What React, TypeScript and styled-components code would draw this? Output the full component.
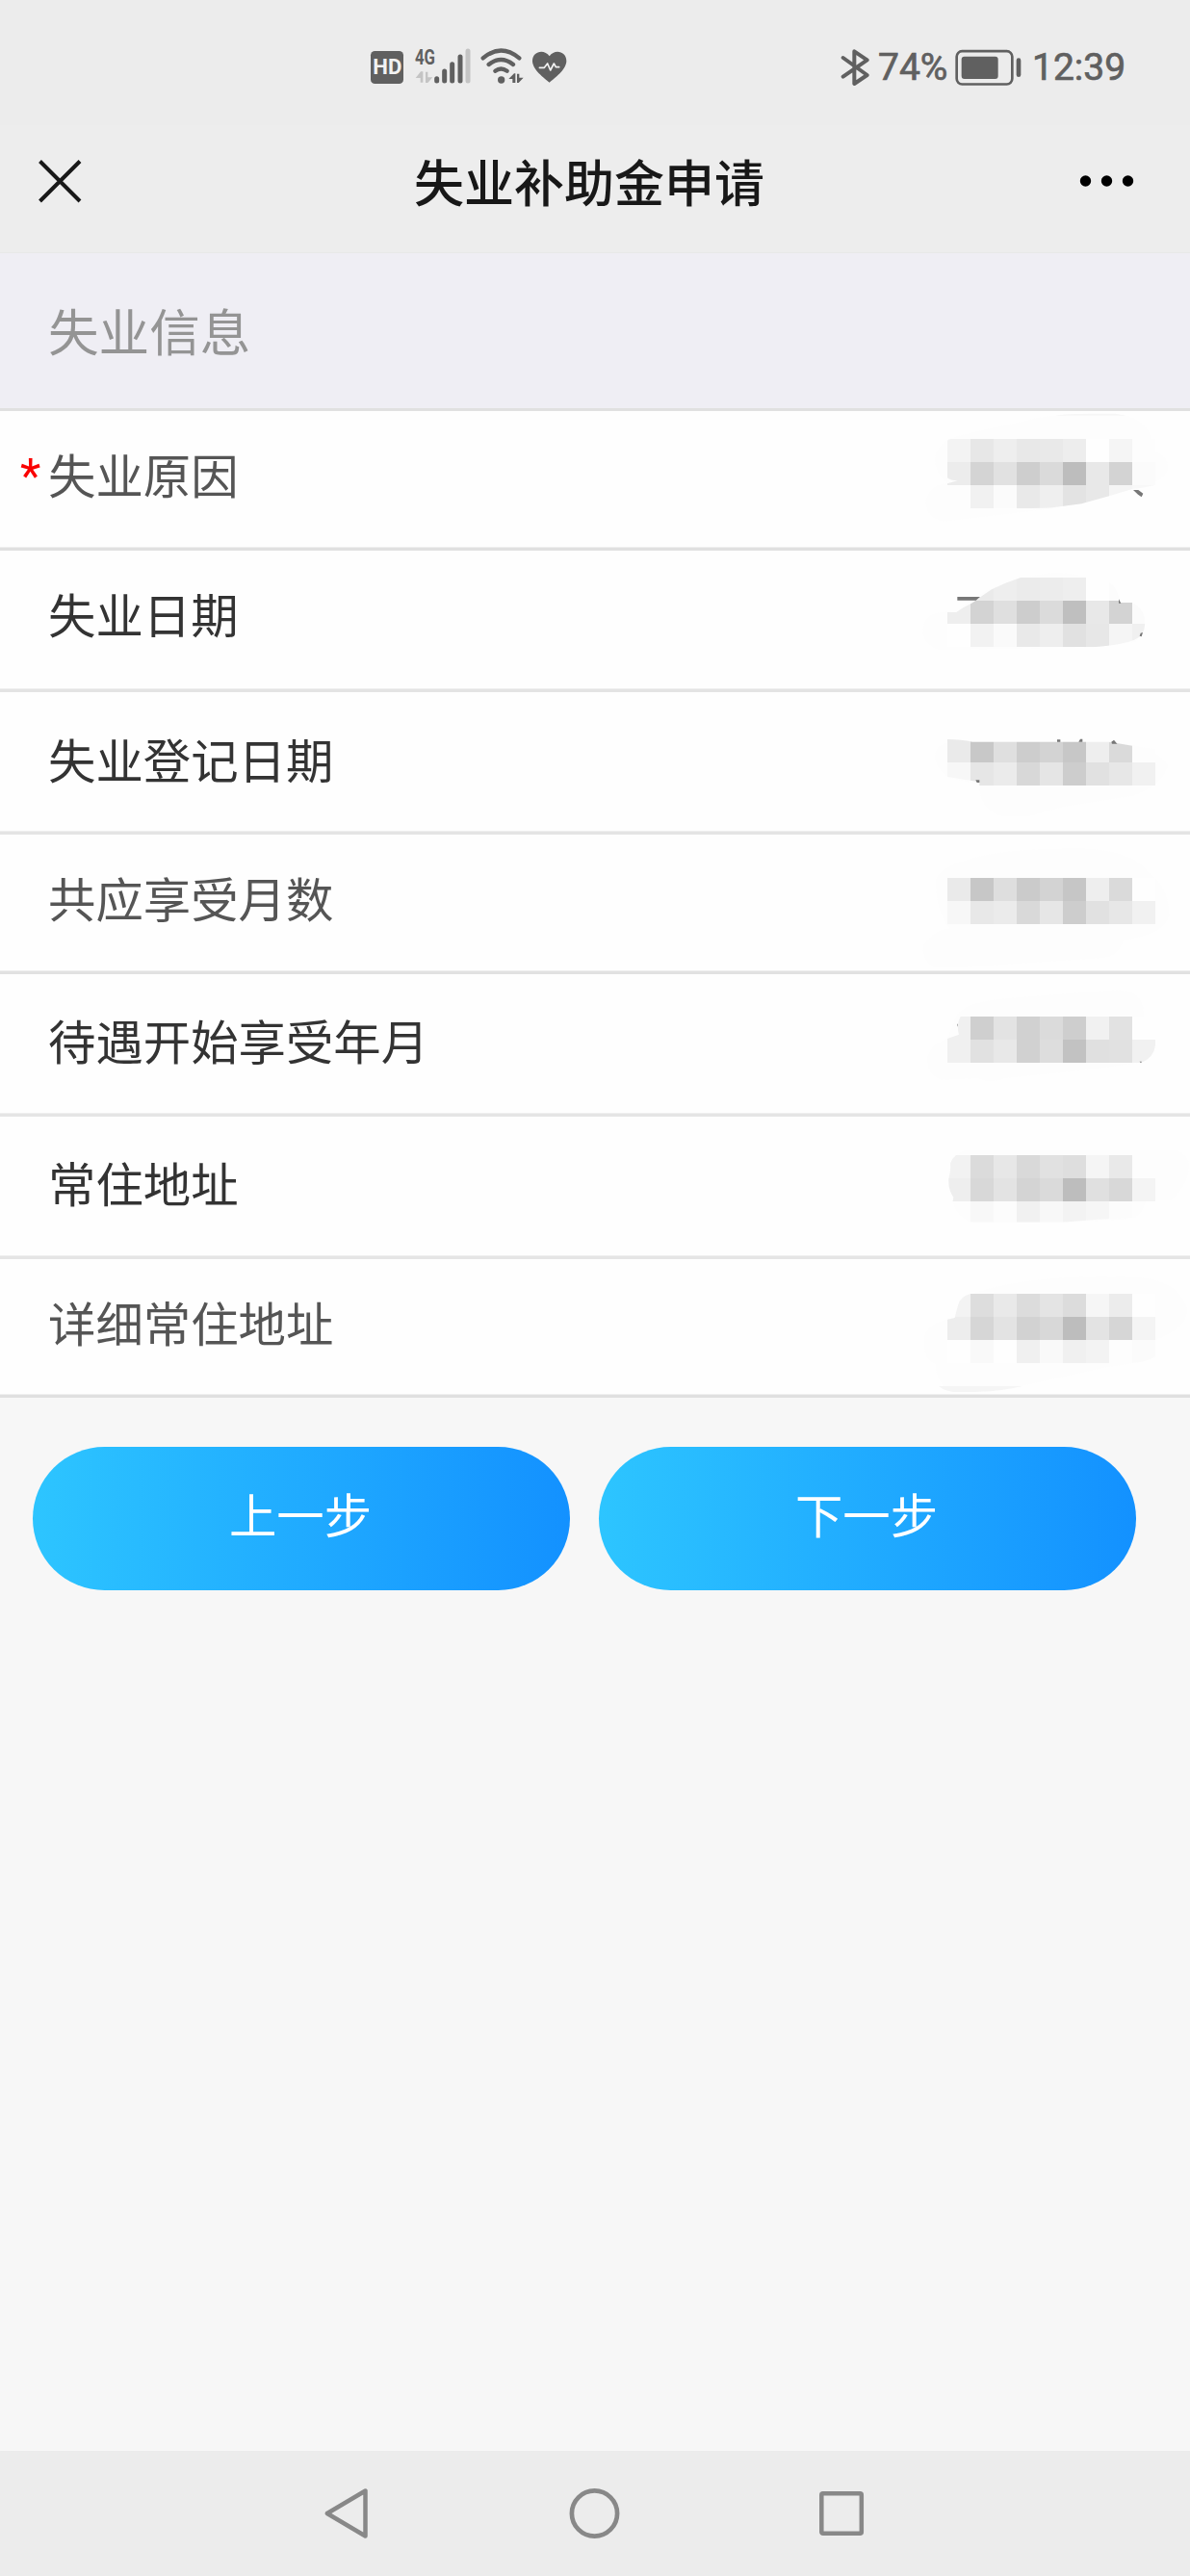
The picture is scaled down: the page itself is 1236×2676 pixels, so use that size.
import React from "react";
import styled, { createGlobalStyle } from "styled-components";

const GlobalStyle = createGlobalStyle`
  html, body { margin: 0; padding: 0; background: #f7f7f7; }
  * { box-sizing: border-box; }
  svg { display: block; flex: none; }
`;

const cjk = `"Noto Sans CJK SC", "Noto Sans", sans-serif`;

const Screen = styled.div`
  width: 1236px;
  height: 2676px;
  display: flex;
  flex-direction: column;
  background: #f7f7f7;
  font-family: ${cjk};
`;

const StatusBar = styled.div`
  height: 130px;
  flex: none;
  display: flex;
  align-items: flex-start;
  justify-content: space-between;
  padding: 40px 66px 0 370px;
  background: #ececec;
`;

const StatusGroup = styled.div`
  display: flex;
  align-items: center;
  height: 60px;
`;

const StatusText = styled.span<{ $width: number; $gap: number }>`
  width: ${(p) => p.$width}px;
  margin-left: ${(p) => p.$gap}px;
  font: 400 39px/60px Roboto, sans-serif;
  color: #606060;
  white-space: nowrap;
  -webkit-text-stroke: 0.7px #606060;
`;

const TitleBar = styled.header`
  height: 133px;
  flex: none;
  display: grid;
  grid-template-columns: 120px 1fr 120px;
  padding-bottom: 17px;
  align-items: center;
  background: #ededed;
  border-bottom: 1px solid #e8e8e8;
`;

const Title = styled.h1`
  margin: 0;
  padding-right: 12px;
  text-align: center;
  font-size: 52px;
  line-height: 72px;
  font-weight: 500;
  color: #181818;
  white-space: nowrap;
`;

const IconButton = styled.button<{ $pad: number }>`
  border: 0;
  background: none;
  padding: 0 0 0 ${(p) => p.$pad}px;
  height: 60px;
`;

const SectionHeader = styled.h2`
  margin: 0;
  height: 164px;
  flex: none;
  padding: 42px 50px 0;
  background: #efeef4;
  border-bottom: 3px solid #e0e0e0;
  color: #949494;
  font-size: 52.6px;
  font-weight: 400;
  line-height: 74px;
`;

const Row = styled.div<{ $height: number; $top: number; $line: string }>`
  height: ${(p) => p.$height}px;
  flex: none;
  display: flex;
  justify-content: space-between;
  padding-left: 50px;
  background: #fefefe;
  border-bottom: 3px solid ${(p) => p.$line};
  box-shadow: inset 0 -1px 0 #efefef;
  & > label { padding-top: ${(p) => p.$top}px; }
`;

const Label = styled.label<{ $muted?: boolean }>`
  position: relative;
  font-size: 49.4px;
  line-height: 60px;
  color: ${(p) => (p.$muted ? "#555" : "#333")};
  white-space: nowrap;
`;

const Required = styled.span`
  position: absolute;
  left: -29px;
  margin-top: 3px;
  font-family: Roboto, sans-serif;
  color: #fa0000;
`;

const Actions = styled.div`
  display: grid;
  grid-template-columns: 558px 558px;
  column-gap: 30px;
  padding: 51px 34px 0;
  flex: 1;
  align-content: start;
`;

const StepButton = styled.button`
  height: 149px;
  border: 0;
  border-radius: 75px;
  padding: 0 2px 11px 0;
  background: linear-gradient(90deg, #2dc5ff, #1391ff);
  color: #fff;
  font-family: ${cjk};
  font-size: 49.4px;
  line-height: 60px;
`;

const NavBar = styled.nav`
  height: 130px;
  flex: none;
  display: flex;
  justify-content: space-between;
  align-items: center;
  padding: 0 336px 0 335px;
  background: #ececec;
`;

const dark = "#606060";
const pale = "#c4c4c4";

const SignalIcons = () => (
  <svg width="230" height="60" viewBox="0 0 690 180" fill="none">
    <rect x="45" y="39" width="102" height="102" rx="13" fill={dark} />
    <text x="97" y="112" textAnchor="middle" fontFamily="Roboto, sans-serif" fontWeight="700" fontSize="65" textLength="90" lengthAdjust="spacingAndGlyphs" fill="#f2f2f2">HD</text>
    <text x="183" y="80" fontFamily="Roboto, sans-serif" fontWeight="700" fontSize="67" textLength="63" lengthAdjust="spacingAndGlyphs" fill={dark}>4G</text>
    <path d="M185 123 201 103H208V137H200V123ZM216 104H223V121H238L223 138H216Z" fill={pale} />
    <g strokeWidth="15" strokeLinecap="round" stroke={dark}>
      <path d="M251 125V132M275 102V132M299 80V132M324 57V132" />
      <path d="M348 39V132" stroke={pale} />
    </g>
    <g stroke={dark} strokeWidth="13" strokeLinecap="round">
      <path d="M395 61Q451 14 508 61" />
      <path d="M413 81Q451 51 489 81" />
      <path d="M433 101Q451 88 470 101" />
    </g>
    <circle cx="452" cy="129" r="11" fill={dark} />
    <path d="M475 126 492 109H496V138H487V126ZM501 110H508V122H521L506 138H501Z" fill={dark} />
    <path d="M602 137C586 124 549 97 549 70C549 39 586 31 602 55C618 31 655 39 655 70C655 97 618 124 602 137Z" fill={dark} />
    <path d="M571 91H586L596 78 605 99 616 78 622 89H632" stroke="#f2f2f2" strokeWidth="5" strokeLinejoin="round" strokeLinecap="round" />
  </svg>
);

const Bluetooth = () => (
  <svg width="30" height="40" viewBox="37 28 90 120" fill="none">
    <path d="M45 58 120 112 80 139V38L120 65 45 117" stroke={dark} strokeWidth="12" strokeLinejoin="round" strokeLinecap="round" />
  </svg>
);

const Battery = () => (
  <svg width="70" height="40" viewBox="395 28 210 120" fill="none">
    <rect x="400" y="37.500" width="173" height="103" rx="17" stroke={dark} strokeWidth="8" />
    <rect x="415" y="54" width="114" height="70" rx="9" fill={dark} />
    <path d="M593 66V111" stroke={dark} strokeWidth="14" strokeLinecap="round" />
  </svg>
);

type MosaicData = {
  viewY: number;
  gridY: number;
  shades: string[][];
  clip: string;
  haze: string;
  specks?: string;
};

type Field = {
  name: string;
  height: number;
  top: number;
  line: string;
  muted?: boolean;
  required?: boolean;
  mosaic: MosaicData;
};

const shadeRow = (s: string) => s.split(" ").map((v) => `#${v}${v}${v}`);

const fields: Field[] = [
  {
    name: "失业原因", height: 145, top: 35, line: "#e0e0e0", muted: true, required: true,
    mosaic: {
      viewY: 6, gridY: 93,
      shades: ["f3 e7 ee e8 e9 ed fe f5 fd", "ec d4 e1 ce da bd e8 d3 fb", "fd f1 fb e9 ef e3 e8 f5 f8"].map(shadeRow),
      clip: "M102 100Q104 93 114 93H751V236Q720 244 678 249L606 271L520 295L430 307Q400 309 318 309H102V232L134 223Q112 223 102 214Z",
      haze: "M63 155Q70 95 150 80L350 35Q440 10 650 18Q720 35 735 85L735 130Q790 140 790 185Q780 225 700 245L430 310L90 350Q35 340 34 285Q50 235 102 230Q63 200 63 155Z",
      specks: "M681 252H697L712 263L707 274L696 266Z",
    },
  },
  {
    name: "失业日期", height: 147, top: 34.5, line: "#e3e3e3",
    mosaic: {
      viewY: 441, gridY: 525,
      shades: ["f4 ea ee eb ec ee fe fc fd", "ee d3 df cd db bf e8 d3 fb", "fe f2 fa e9 ee e1 e7 f5 f0"].map(shadeRow),
      clip: "M102 633H130Q150 618 180 604Q205 585 240 562Q285 540 330 525H534Q586 524 619 550Q636 573 639 603H677Q717 620 718 669Q716 708 683 720Q645 735 566 741H102Z",
      haze: "M30 665Q50 625 130 633Q230 530 440 509Q600 515 639 603L718 660L690 725L570 742L80 751Q25 735 25 690Z",
      specks: "M133 585H204L191 596H133ZM636 592 643 605H636ZM701 707 704 698 711 696 707 709Z",
    },
  },
  {
    name: "失业登记日期", height: 148, top: 39, line: "#e4e4e4",
    mosaic: {
      viewY: 12, gridY: 159,
      shades: ["ea c8 df cd d3 c7 ee da fd", "f7 e6 eb d8 e5 cd e1 e7 f1", "fe fd fd fd fd fd fd fd fd"].map(shadeRow),
      clip: "M102 159Q145 159 180 167H605L630 171L678 179L750 190V303H202V292L102 276Z",
      haze: "M63 210Q70 160 150 165H610Q750 180 790 240Q770 305 680 335L460 370L360 398H270Q200 375 202 300L110 280Q63 250 63 210Z",
      specks: "M444 160H454V167H444ZM511 167 516 158H523V167ZM613 167 621 161 631 173H615ZM190 286H202V294H194Z",
    },
  },
  {
    name: "共应享受月数", height: 145, top: 35, line: "#e1e1e1", muted: true,
    mosaic: {
      viewY: 456, gridY: 591,
      shades: ["ea c7 de cb d3 c6 ee da fe", "f7 e8 eb d9 e6 cd e1 e7 f1", "fe fd fd fd fd fd fd fd fd"].map(shadeRow),
      clip: "M102 591H750V735H102Z",
      haze: "M66 600Q75 555 180 530Q300 495 550 500Q690 515 725 570Q795 620 793 710Q780 765 650 785Q640 830 590 840L160 869H60Q25 850 25 805Q60 750 110 750Q66 700 66 600Z",
    },
  },
  {
    name: "待遇开始享受年月", height: 148, top: 37.5, line: "#e5e5e5",
    mosaic: {
      viewY: 21, gridY: 153,
      shades: ["f0 cf e3 d1 db ce f1 e2 fe", "f0 e1 e8 d1 dd c2 e0 e1 f1"].map(shadeRow),
      clip: "M143 153H750V242Q746 280 706 297H102V222L138 209Q129 178 143 153Z",
      haze: "M130 150Q160 105 300 95L630 70Q720 75 713 150L750 225Q750 282 700 297L530 320L280 345Q230 365 200 345L80 350Q35 330 40 280Q50 240 102 222Z",
      specks: "M132 176H134V184H133ZM701 293 707 293V296H703Z",
    },
  },
  {
    name: "常住地址", height: 148, top: 37.5, line: "#e5e5e5",
    mosaic: {
      viewY: 465, gridY: 585,
      shades: ["f2 db e7 d9 e1 de f5 e9 fd", "ee d8 e3 d4 da bd e0 d8 f4", "fd f8 fc f1 f8 f3 f6 fc fd"].map(shadeRow),
      clip: "M129 585H750V729H717Q710 768 687 779L570 785L460 794H174Q131 776 119 728L121 716Q104 693 106 659Q114 631 111 611Q116 595 129 585Z",
      haze: "M106 659Q110 585 155 570H820Q858 590 855 620Q850 680 800 725H720Q715 775 650 785L470 796H190Q130 780 119 728Z",
    },
  },
  {
    name: "详细常住地址", height: 144, top: 34.5, line: "#e0e0e0", muted: true,
    mosaic: {
      viewY: 114, gridY: 222,
      shades: ["f3 dd e9 dc e4 dc f6 ec fe", "ed d6 e3 d2 d8 bd e3 d6 f4", "fe f9 fe f0 f9 f0 f3 fd fb"].map(shadeRow),
      clip: "M174 222H750V418Q717 438 672 438H102V302L125 297Q132 269 135 258Q142 230 174 222Z",
      haze: "M30 360Q35 310 125 297Q130 240 180 222Q350 160 670 170Q820 170 850 270Q850 330 750 366V418Q710 438 600 450L330 510Q260 528 130 528Q65 510 65 440Q25 430 30 360Z",
    },
  },
];

const Mosaic = ({ data, id, height }: { data: MosaicData; id: string; height: number }) => (
  <svg width="286" height={height} viewBox={`0 ${data.viewY} 858 ${height * 3}`}>
    <defs>
      <clipPath id={id}><path d={data.clip} /></clipPath>
    </defs>
    <path d={data.haze} fill="#fdfdfd" />
    <g clipPath={`url(#${id})`} shapeRendering="crispEdges">
      {data.shades.map((row, r) =>
        row.map((fill, c) => (
          <rect key={`${r}-${c}`} x={102 + c * 72} y={data.gridY + r * 72} width="72" height="72" fill={fill} />
        ))
      )}
    </g>
    {data.specks && <path d={data.specks} fill="#777" />}
    {id === "value-6" && <path d="M76 510H335Q270 526 185 528H120Q89 523 76 510Z" fill="#f5f5f5" />}
    {id === "value-0" && <path d="M440 20Q465 14 550 14H625L660 20Z" fill="#f6f6f6" />}
  </svg>
);

export default function App() {
  return (
    <Screen>
      <GlobalStyle />
      <StatusBar>
        <StatusGroup><SignalIcons /></StatusGroup>
        <StatusGroup>
          <Bluetooth />
          <StatusText $width={80} $gap={9}>74%</StatusText>
          <Battery />
          <StatusText $width={98} $gap={10}>12:39</StatusText>
        </StatusGroup>
      </StatusBar>
      <TitleBar>
        <IconButton $pad={37} aria-label="关闭">
          <svg width="50" height="50" viewBox="0 0 50 50">
            <path d="M4.500 4.500 46 46M46 4.500 4.500 46" stroke="#181818" strokeWidth="4" />
          </svg>
        </IconButton>
        <Title>失业补助金申请</Title>
        <IconButton $pad={3} aria-label="更多">
          <svg width="60" height="20" viewBox="0 0 60 20">
            <circle cx="8.500" cy="10" r="5.700" />
            <circle cx="30.500" cy="10" r="5.700" />
            <circle cx="52.500" cy="10" r="5.700" />
          </svg>
        </IconButton>
      </TitleBar>
      <SectionHeader>失业信息</SectionHeader>
      {fields.map((f, i) => (
        <Row key={f.name} $height={f.height} $top={f.top} $line={f.line}>
          <Label $muted={f.muted}>
            {f.required && <Required>*</Required>}
            {f.name}
          </Label>
          <Mosaic data={f.mosaic} id={`value-${i}`} height={f.height - 3} />
        </Row>
      ))}
      <Actions>
        <StepButton>上一步</StepButton>
        <StepButton>下一步</StepButton>
      </Actions>
      <NavBar>
        <svg width="50" height="56" viewBox="0 0 50 56" fill="none">
          <path d="M44.500 4.500V51.500L4.800 28Z" stroke="#888" strokeWidth="4.500" strokeLinejoin="round" />
        </svg>
        <svg width="56" height="56" viewBox="0 0 56 56" fill="none">
          <circle cx="27.500" cy="28" r="23.600" stroke="#888" strokeWidth="4.700" />
        </svg>
        <svg width="50" height="56" viewBox="0 0 50 56" fill="none">
          <rect x="3.300" y="7.300" width="41.500" height="41.500" rx="1.500" stroke="#888" strokeWidth="4.500" />
        </svg>
      </NavBar>
    </Screen>
  );
}
